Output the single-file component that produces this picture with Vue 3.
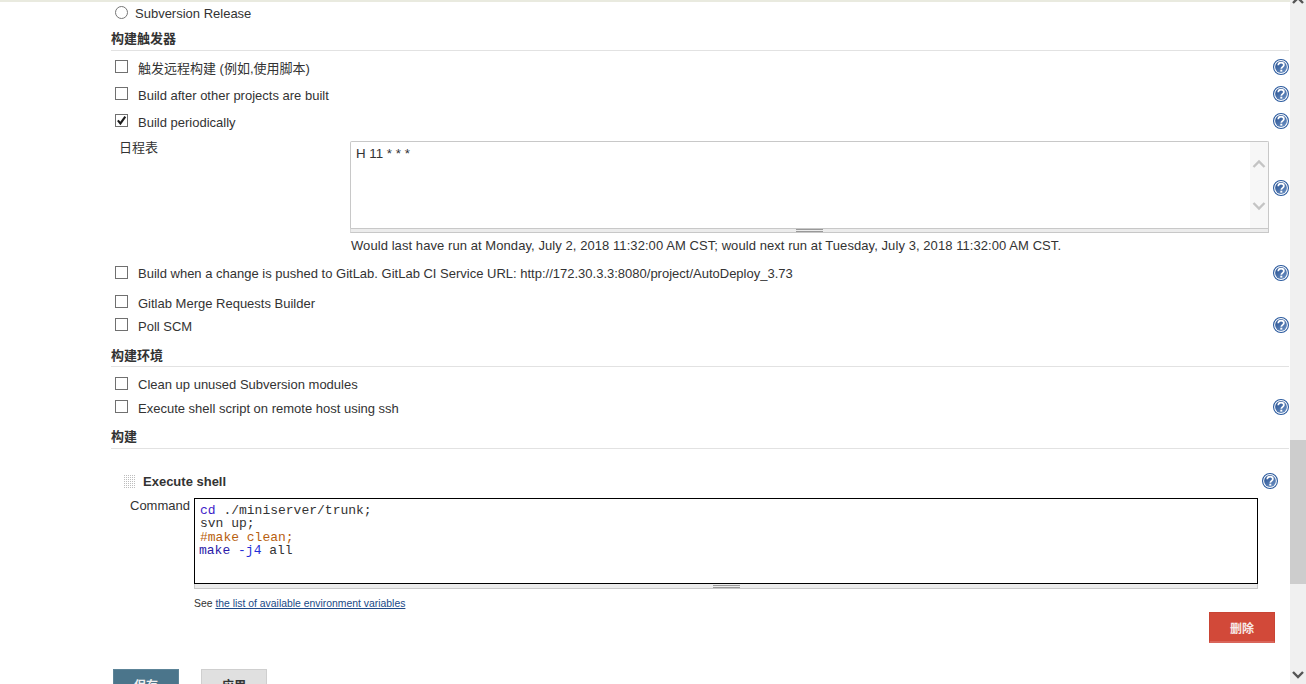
<script setup>
</script>

<template>
  <div class="page">
    <div class="topline"></div>
    <div class="body">
      <main class="main">
        <div class="row radio-row h-top">
          <span class="radio"></span>
          <span class="lbl">Subversion Release</span>
        </div>

        <div class="section s-trigger">构建触发器</div>

        <div class="row h27 first">
          <span class="box"></span><span class="lbl cjk">触发远程构建 (例如,使用脚本)</span>
          <svg class="help" viewBox="0 0 16 16"><use href="#q" /></svg>
        </div>
        <div class="row h27">
          <span class="box"></span><span class="lbl">Build after other projects are built</span>
          <svg class="help" viewBox="0 0 16 16"><use href="#q" /></svg>
        </div>
        <div class="row h27">
          <span class="box">
            <svg class="tick" viewBox="0 0 13 13"><path d="M2.2 6.4 L5.2 10 L11 1.8" fill="none" stroke="#1c1c1c" stroke-width="2.5" /></svg>
          </span>
          <span class="lbl">Build periodically</span>
          <svg class="help" viewBox="0 0 16 16"><use href="#q" /></svg>
        </div>

        <div class="schedule">
          <div class="sched-label">日程表</div>
          <div class="sched-field">
            <div class="sched-area">
              <div class="sched-text">H 11 * * *</div>
              <div class="sched-scroll">
                <svg viewBox="0 0 14 10" class="chev"><path d="M1.5 8 L7 2.5 L12.5 8" /></svg>
                <svg viewBox="0 0 14 10" class="chev"><path d="M1.5 2 L7 7.5 L12.5 2" /></svg>
              </div>
            </div>
            <div class="grip"><span></span></div>
            <div class="validation">Would last have run at Monday, July 2, 2018 11:32:00 AM CST; would next run at Tuesday, July 3, 2018 11:32:00 AM CST.</div>
          </div>
          <svg class="help sched-help" viewBox="0 0 16 16"><use href="#q" /></svg>
        </div>

        <div class="row gitlab">
          <span class="box"></span><span class="lbl">Build when a change is pushed to GitLab. GitLab CI Service URL: http://172.30.3.3:8080/project/AutoDeploy_3.73</span>
          <svg class="help" viewBox="0 0 16 16"><use href="#q" /></svg>
        </div>
        <div class="row merge">
          <span class="box"></span><span class="lbl">Gitlab Merge Requests Builder</span>
        </div>
        <div class="row poll">
          <span class="box"></span><span class="lbl">Poll SCM</span>
          <svg class="help" viewBox="0 0 16 16"><use href="#q" /></svg>
        </div>

        <div class="section s-env">构建环境</div>
        <div class="row clean">
          <span class="box"></span><span class="lbl">Clean up unused Subversion modules</span>
        </div>
        <div class="row exec">
          <span class="box"></span><span class="lbl">Execute shell script on remote host using ssh</span>
          <svg class="help" viewBox="0 0 16 16"><use href="#q" /></svg>
        </div>

        <div class="section s-build">构建</div>

        <div class="step">
          <div class="step-head">
            <svg class="handle" viewBox="0 0 12 14">
              <defs>
                <pattern id="dots" width="2" height="2" patternUnits="userSpaceOnUse">
                  <rect width="1" height="1" fill="#bdbdbd" />
                </pattern>
              </defs>
              <rect width="12" height="14" fill="url(#dots)" />
            </svg>
            <span class="step-title">Execute shell</span>
            <svg class="help step-help" viewBox="0 0 16 16"><use href="#q" /></svg>
          </div>
          <div class="cmd">
            <div class="cmd-label">Command</div>
            <div class="cmd-field">
              <div class="code"><div><span class="kw">cd</span> ./miniserver/trunk;</div><div>svn up;</div><div class="cm">#make clean;</div><div class="mk"><span class="kw2">make</span> <span class="kw3">-j4</span> <span class="pl">all</span></div></div>
              <div class="grip grip2"><span></span></div>
              <div class="see">See <a class="link">the list of available environment variables</a></div>
            </div>
          </div>
          <div class="del-row"><button class="btn del">删除</button></div>
        </div>

        <div class="actions">
          <button class="btn save">保存</button>
          <button class="btn apply">应用</button>
        </div>
      </main>

      <aside class="scrollbar">
        <svg class="sb-arrow sb-up" viewBox="0 0 14 10"><path d="M2 8 L7 3 L12 8" /></svg>
        <div class="sb-thumb"></div>
        <svg class="sb-arrow sb-down" viewBox="0 0 14 10"><path d="M2 2 L7 7 L12 2" /></svg>
      </aside>
    </div>

    <svg class="defs" width="0" height="0">
      <defs>
        <linearGradient id="qg" x1="0.1" y1="0" x2="0.8" y2="1">
          <stop offset="0" stop-color="#254f90" />
          <stop offset="1" stop-color="#6a8fc2" />
        </linearGradient>
        <symbol id="q" viewBox="0 0 16 16">
          <circle cx="8" cy="8" r="7.45" fill="#fff" stroke="#2a5a9e" stroke-width="1.1" />
          <circle cx="8" cy="8" r="5.9" fill="url(#qg)" />
          <path d="M5.2 6.2 C5.3 4.3 6.7 3.6 8.1 3.6 C9.8 3.6 10.9 4.6 10.9 6 C10.9 7.8 8.4 7.9 8.3 9.8" fill="none" stroke="#fff" stroke-width="1.7" />
          <rect x="7.3" y="10.7" width="2" height="1.9" fill="#fff" />
        </symbol>
      </defs>
    </svg>
  </div>
</template>

<style>
html, body { margin: 0; background: #fff; overflow: hidden; }
</style>

<style scoped>
.page {
  width: 1306px;
  height: 684px;
  overflow: hidden;
  position: relative;
  font-family: "Liberation Sans", "Noto Sans CJK SC", sans-serif;
  font-size: 13px;
  color: #333;
  background: #fff;
}
.topline { height: 2px; background: #e9eadf; }
.body { display: flex; height: 682px; }
.main { width: 1290px; padding-left: 111px; box-sizing: border-box; flex: none; }
.defs { position: absolute; }

.row { display: flex; align-items: center; position: relative; padding-left: 4px; }
.h-top { height: 20px; margin-top: 1px; }
.h27 { height: 27px; }
.lbl { margin-left: 10px; white-space: nowrap; padding-top: 2px; }
.lbl.cjk { padding-top: 0; margin-bottom: 1px; }
.radio { width: 11px; height: 11px; border: 1px solid #767676; border-radius: 50%; background: #fff; flex: none; margin-top: -2px; }
.radio + .lbl { margin-left: 7px; padding-top: 0; }
.box { width: 11px; height: 11px; border: 1px solid #707070; background: #fff; flex: none; position: relative; margin-top: -2px; }
.tick { position: absolute; left: 0; top: 0; width: 11px; height: 11px; }
.help { width: 16px; height: 16px; position: absolute; right: 1px; top: 50%; margin-top: -8px; flex: none; }
.h27 .help { margin-top: -9px; }

.section { font-weight: bold; color: #333; border-bottom: 1px solid #e2e2e2; margin-right: 1px; font-size: 13px; }
.s-trigger { margin-top: 6px; height: 21px; line-height: 20px; }
.first { margin-top: 3px; }

.schedule { display: flex; position: relative; margin-top: 6px; }
.sched-label { width: 240px; padding-left: 8px; box-sizing: border-box; flex: none; line-height: 14px; }
.sched-field { width: 919px; flex: none; margin-left: -1px; }
.sched-area { height: 86px; border: 1px solid #c8c8c8; border-bottom: none; border-radius: 2px 2px 0 0; display: flex; justify-content: space-between; }
.sched-text { padding: 4px 5px; line-height: 16px; font-size: 13.33px; }
.sched-scroll { width: 18px; background: #f7f7f7; display: flex; flex-direction: column; justify-content: space-between; align-items: center; padding: 17px 0 17px; box-sizing: border-box; }
.chev { width: 14px; height: 10px; }
.chev path { fill: none; stroke: #c4c4c4; stroke-width: 2.4; }
.grip { height: 5px; background: #ececec; border: 1px solid #c8c8c8; border-left-color: #d8d8d8; box-sizing: border-box; display: flex; justify-content: center; align-items: center; }
.grip span { display: block; width: 27px; height: 3px; border-top: 1px solid #999; border-bottom: 1px solid #999; box-sizing: border-box; }
.validation { margin: 5px 0 0 1px; line-height: 16px; white-space: nowrap; font-size: 13px; letter-spacing: 0.07px; }
.sched-help { top: 39px; margin-top: 0; }

.gitlab { height: 24px; margin-top: 6px; }
.gitlab .box, .clean .box { margin-top: 0; }
.gitlab .help { margin-top: -7px; }
.merge { height: 24px; margin-top: 6px; }
.poll { height: 24px; margin-top: -1px; }
.s-env { margin-top: 9px; height: 20px; line-height: 20px; }
.clean { height: 24px; margin-top: 4px; }
.exec { height: 24px; }
.s-build { margin-top: 7px; height: 22px; line-height: 22px; }

.step { padding-left: 13px; }
.step-head { display: flex; align-items: center; height: 24px; margin-top: 20px; position: relative; }
.handle { width: 12px; height: 14px; margin-right: 7px; margin-top: 1px; flex: none; }
.step-title { font-weight: bold; font-size: 13px; }
.step-help { right: 12px; }
.cmd { display: flex; margin-top: 5px; }
.cmd-label { width: 70px; flex: none; padding-left: 6px; box-sizing: border-box; line-height: 16px; white-space: nowrap; }
.cmd-field { width: 1064px; flex: none; }
.code { height: 86px; box-sizing: border-box; border: 1px solid #000; padding: 5px 5px; font-family: "Liberation Mono", monospace; font-size: 13px; line-height: 13.4px; color: #333; background: #fff; }
.kw { color: #3d22c8; }
.cm { color: #b85f10; }
.mk { margin-left: -1px; }
.kw2 { color: #2a1aa8; }
.kw3 { color: #1f2fd8; }
.grip2 { height: 5px; background: #ececec; border-color: #c8c8c8; border-top: none; }
.see { font-size: 10.4px; margin-top: 9px; line-height: 12px; white-space: nowrap; }
.link { color: #204a87; text-decoration: underline; }
.del-row { display: flex; justify-content: flex-end; margin-right: 15px; margin-top: 2px; }

.btn { font-family: "Liberation Sans", "Noto Sans CJK SC", sans-serif; font-size: 12px; width: 66px; height: 31px; box-sizing: border-box; padding: 0; display: block; }
.del { background: #d24939; border: 1px solid #c94434; border-bottom: 2px solid #d9655a; color: #f8ebe8; font-weight: bold; }
.actions { display: flex; gap: 22px; margin-top: 26px; margin-left: 2px; }
.save { background: #4b758b; border: 1px solid #5c8498; color: #f0f0f0; font-weight: bold; }
.apply { background: #e0e0e0; border: 1px solid #cfcfcf; color: #333; font-weight: bold; }

.scrollbar { width: 16px; background: #f0f0f0; position: relative; flex: none; margin-top: -2px; height: 684px; }
.sb-arrow { position: absolute; left: 1px; width: 14px; height: 10px; }
.sb-arrow path { fill: none; stroke: #555; stroke-width: 2.4; }
.sb-up { top: -5px; }
.sb-down { top: 670px; }
.sb-thumb { position: absolute; left: 0; right: 0; top: 440px; height: 144px; background: #cdcdcd; }
</style>
